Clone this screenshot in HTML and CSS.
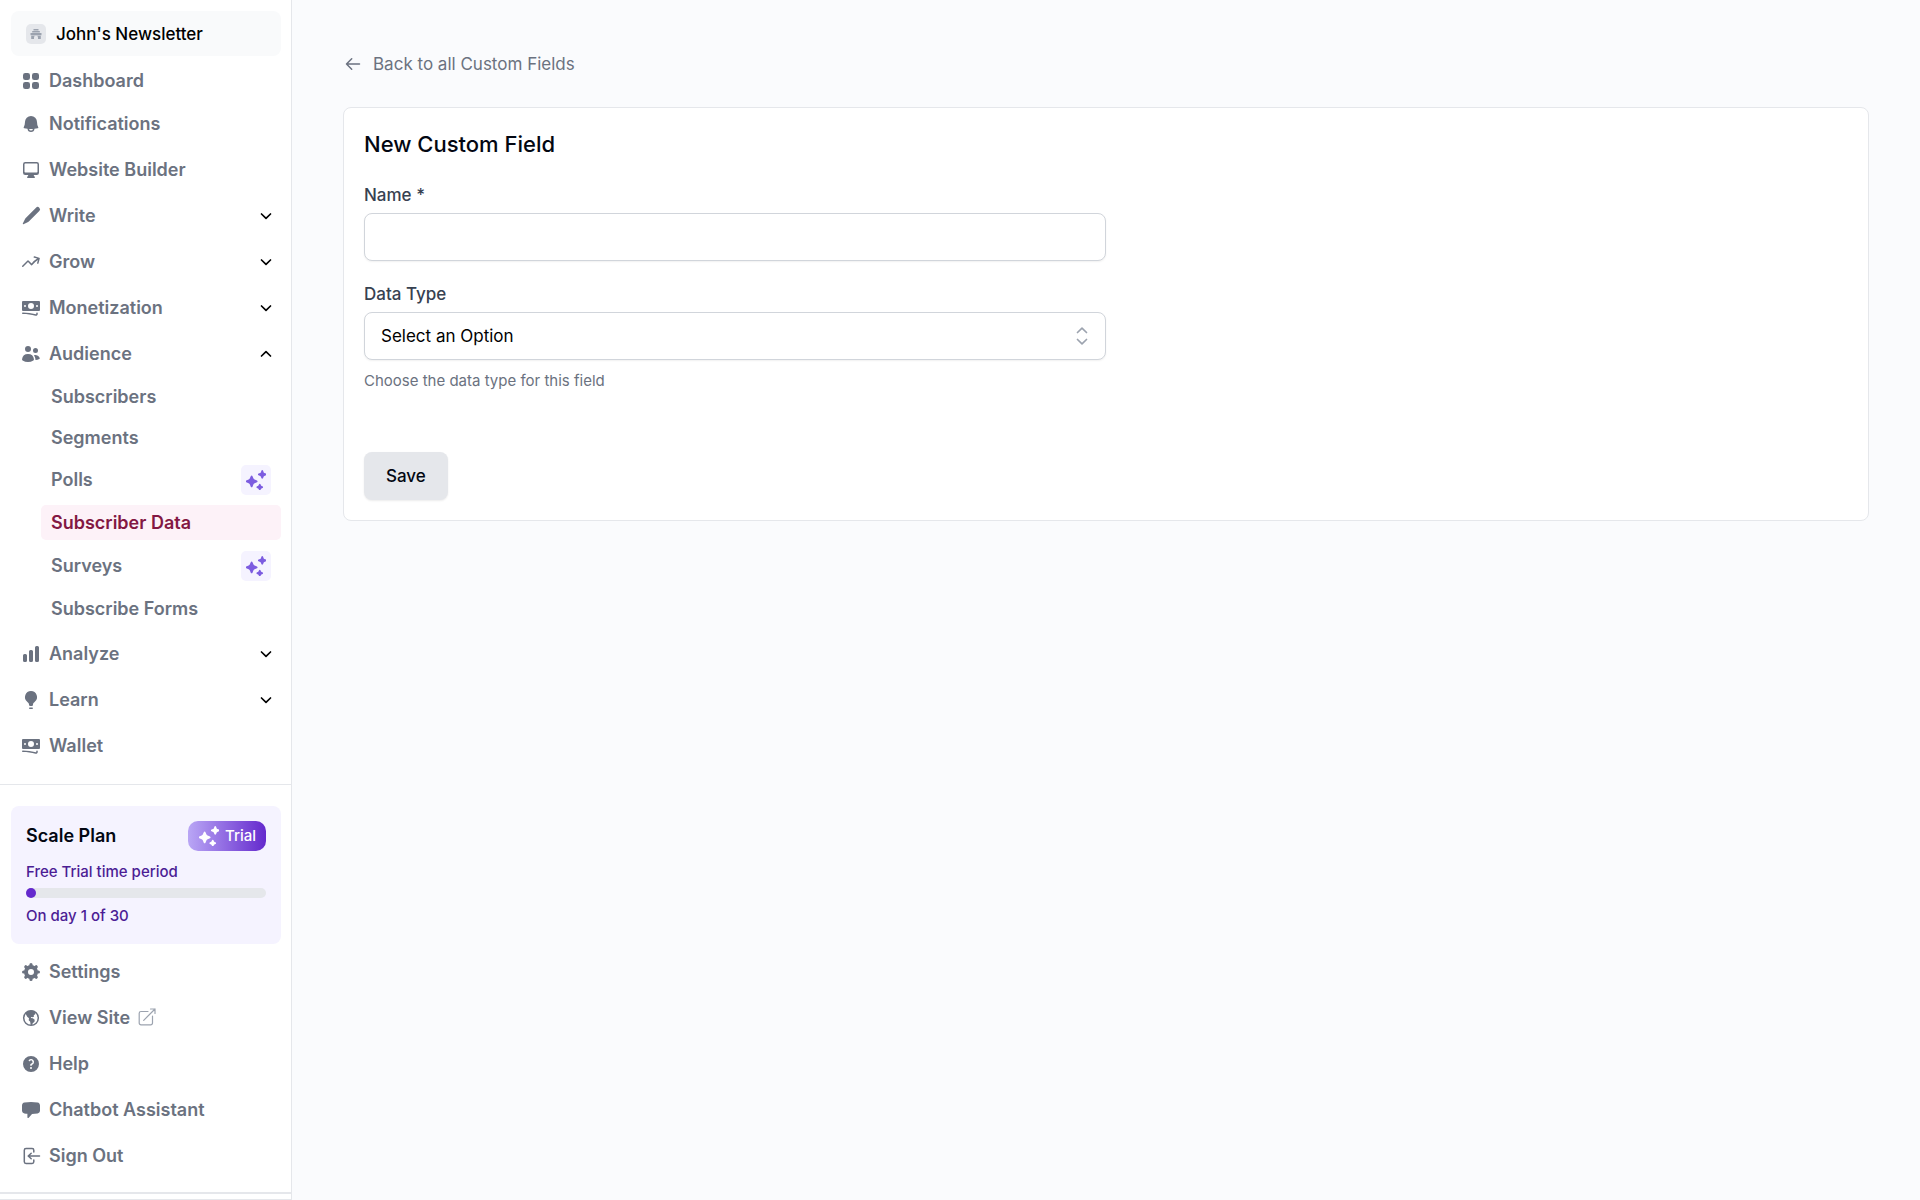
FILE: index.html
```html
<!DOCTYPE html>
<html lang="en">
<head>
<meta charset="utf-8">
<meta name="viewport" content="width=device-width, initial-scale=1">
<title>New Custom Field</title>
<link rel="stylesheet" href="styles.css">
</head>
<body>
<svg class="sprite" aria-hidden="true">
  <symbol id="i-chevron" viewBox="0 0 12 12"><path d="M1.500 4 6 8.300 10.500 4" fill="none" stroke="currentColor" stroke-width="1.700" stroke-linecap="round" stroke-linejoin="round"/></symbol>
  <symbol id="i-sparkles" viewBox="2 1 16 16"><path d="M6.500 5.300c.3 0 .5.200.6.400l.8 1.900c.2.500.5.800 1 1l1.900.8c.6.300.6 1.100 0 1.400l-1.900.8c-.5.200-.8.500-1 1l-.8 1.900c-.3.500-1 .5-1.200 0l-.8-1.900c-.2-.5-.5-.8-1-1l-1.900-.8c-.6-.3-.6-1.100 0-1.400l1.900-.8c.5-.2.800-.5 1-1l.8-1.900c.1-.2.300-.4.600-.4ZM15 1c.3 0 .5.200.6.400l.5 1.300c.1.300.3.500.6.600l1.300.5c.6.300.6 1.100 0 1.400l-1.300.5c-.3.100-.5.300-.6.600l-.5 1.300c-.3.500-1 .5-1.200 0l-.5-1.300c-.1-.3-.3-.5-.6-.6L12 5.200c-.6-.3-.6-1.100 0-1.400l1.300-.5c.3-.1.500-.3.600-.6l.5-1.300c.1-.2.300-.4.600-.4ZM13 12c.3 0 .5.200.6.400l.3.800c.1.200.3.400.5.500l.8.300c.6.300.6 1.100 0 1.400l-.8.300c-.2.100-.4.300-.5.500l-.3.800c-.3.500-1 .5-1.200 0l-.3-.8c-.1-.2-.3-.4-.5-.5l-.8-.3c-.6-.3-.6-1.100 0-1.400l.8-.3c.2-.1.400-.3.500-.5l.3-.8c.1-.2.300-.4.600-.4Z" fill="currentColor"/></symbol>
  <symbol id="i-banknotes" viewBox="0 0 20 20"><path fill="currentColor" fill-rule="evenodd" d="M1 4a1 1 0 0 1 1-1h16a1 1 0 0 1 1 1v8a1 1 0 0 1-1 1H2a1 1 0 0 1-1-1V4Zm12 4a3 3 0 1 1-6 0 3 3 0 0 1 6 0ZM4 9a1 1 0 1 0 0-2 1 1 0 0 0 0 2Zm13-1a1 1 0 1 1-2 0 1 1 0 0 1 2 0ZM1.750 14.500a.75.75 0 0 0 0 1.500c4.417 0 8.693.603 12.749 1.730 1.111.309 2.251-.512 2.251-1.696v-.784a.75.75 0 0 0-1.500 0v.784a.272.272 0 0 1-.35.250A49.043 49.043 0 0 0 1.750 14.500Z"/></symbol>
</svg>
<div class="app">
  <aside class="sidebar">
    <div class="top">
      <button class="workspace" type="button">
        <span class="avatar"><svg viewBox="0 0 12 12" width="12" height="12" aria-hidden="true"><path fill="currentColor" fill-rule="evenodd" d="M3.500 1h5v1.400h-5zM2.200 2.900h7.600v1.600H2.200zM.5 5h11v2.200H.5zM1.200 7.700h9.600V11H8V9.600a2 2 0 0 0-4 0V11H1.200z"/></svg></span>
        <span>John's Newsletter</span>
      </button>
      <nav class="nav" aria-label="Main">
        <a class="item short" href="#"><svg class="icon" viewBox="0 0 20 20" aria-hidden="true"><path fill="currentColor" d="M4.250 2A2.250 2.250 0 0 0 2 4.250v2.500A2.250 2.250 0 0 0 4.250 9h2.500A2.250 2.250 0 0 0 9 6.750v-2.500A2.250 2.250 0 0 0 6.750 2h-2.500Zm0 9A2.250 2.250 0 0 0 2 13.250v2.500A2.250 2.250 0 0 0 4.250 18h2.500A2.250 2.250 0 0 0 9 15.750v-2.500A2.250 2.250 0 0 0 6.750 11h-2.500Zm9-9A2.250 2.250 0 0 0 11 4.250v2.500A2.250 2.250 0 0 0 13.250 9h2.500A2.250 2.250 0 0 0 18 6.750v-2.500A2.250 2.250 0 0 0 15.750 2h-2.500Zm0 9A2.250 2.250 0 0 0 11 13.250v2.500A2.250 2.250 0 0 0 13.250 18h2.500A2.250 2.250 0 0 0 18 15.750v-2.500A2.250 2.250 0 0 0 15.750 11h-2.500Z"/></svg>Dashboard</a>
        <a class="item" href="#"><svg class="icon" viewBox="0 0 20 20" aria-hidden="true"><path fill="currentColor" fill-rule="evenodd" d="M10 2a6 6 0 0 0-6 6c0 1.887-.454 3.665-1.257 5.234a.75.75 0 0 0 .515 1.076 32.910 32.910 0 0 0 3.256.508 3.500 3.500 0 0 0 6.972 0 32.903 32.903 0 0 0 3.256-.508.75.75 0 0 0 .515-1.076A11.448 11.448 0 0 1 16 8a6 6 0 0 0-6-6ZM8.050 14.943a33.540 33.540 0 0 0 3.900 0 2 2 0 0 1-3.900 0Z"/></svg>Notifications</a>
        <a class="item" href="#"><svg class="icon" viewBox="0 0 20 20" aria-hidden="true"><path fill="currentColor" fill-rule="evenodd" d="M2 4.250A2.250 2.250 0 0 1 4.250 2h11.500A2.250 2.250 0 0 1 18 4.250v8.500A2.250 2.250 0 0 1 15.750 15h-3.105a3.501 3.501 0 0 0 1.100 1.677A.75.75 0 0 1 13.260 18H6.740a.75.75 0 0 1-.484-1.323A3.501 3.501 0 0 0 7.355 15H4.250A2.250 2.250 0 0 1 2 12.750v-8.500Zm1.500 0a.75.75 0 0 1 .75-.75h11.500a.75.75 0 0 1 .75.750v7.500a.75.75 0 0 1-.75.750H4.250a.75.75 0 0 1-.75-.75v-7.500Z"/></svg>Website Builder</a>
        <button class="item" type="button"><svg class="icon" viewBox="0 0 20 20" aria-hidden="true"><path fill="currentColor" d="M18.300 1.700a2.300 2.300 0 0 0-3.300 0L5 11.700c-.5.500-.9 1.100-1.200 1.700l-2 4.200c-.2.400.2.800.6.600l4.200-2c.6-.3 1.200-.7 1.700-1.200l10-10a2.300 2.300 0 0 0 0-3.300Z"/></svg>Write<svg class="chevron" aria-hidden="true"><use href="#i-chevron"/></svg></button>
        <button class="item" type="button"><svg class="icon" viewBox="0 0 20 20" aria-hidden="true"><path fill="currentColor" fill-rule="evenodd" d="M12.577 4.878a.75.75 0 0 1 .919-.53l4.780 1.281a.75.75 0 0 1 .531.919l-1.281 4.780a.75.75 0 0 1-1.449-.387l.81-3.022a19.407 19.407 0 0 0-5.594 5.203.75.75 0 0 1-1.139.093L7 10.060l-4.720 4.720a.75.75 0 0 1-1.060-1.061l5.250-5.250a.75.75 0 0 1 1.060 0l3.074 3.073a20.923 20.923 0 0 1 5.545-4.931l-3.042-.815a.75.75 0 0 1-.53-.919Z"/></svg>Grow<svg class="chevron" aria-hidden="true"><use href="#i-chevron"/></svg></button>
        <button class="item" type="button"><svg class="icon" aria-hidden="true"><use href="#i-banknotes"/></svg>Monetization<svg class="chevron" aria-hidden="true"><use href="#i-chevron"/></svg></button>
        <button class="item" type="button" aria-expanded="true"><svg class="icon" viewBox="0 0 20 20" aria-hidden="true"><path fill="currentColor" d="M7 8a3 3 0 1 0 0-6 3 3 0 0 0 0 6ZM14.500 9a2.500 2.500 0 1 0 0-5 2.500 2.500 0 0 0 0 5ZM1.615 16.428a1.224 1.224 0 0 1-.569-1.175 6.002 6.002 0 0 1 11.908 0c.058.467-.172.920-.57 1.174A9.953 9.953 0 0 1 7 18a9.953 9.953 0 0 1-5.385-1.572ZM14.500 16h-.106c.07-.297.088-.611.048-.933a7.470 7.470 0 0 0-1.588-3.755 4.502 4.502 0 0 1 5.874 2.636.818.818 0 0 1-.36.980A7.465 7.465 0 0 1 14.500 16Z"/></svg>Audience<svg class="chevron up" aria-hidden="true"><use href="#i-chevron"/></svg></button>
        <div class="subnav">
          <a class="sub short" href="#">Subscribers</a>
          <a class="sub short" href="#">Segments</a>
          <a class="sub" href="#">Polls<span class="premium"><svg width="20" height="20" aria-hidden="true"><use href="#i-sparkles"/></svg></span></a>
          <a class="sub active" href="#" aria-current="page">Subscriber Data</a>
          <a class="sub" href="#">Surveys<span class="premium"><svg width="20" height="20" aria-hidden="true"><use href="#i-sparkles"/></svg></span></a>
          <a class="sub" href="#">Subscribe Forms</a>
        </div>
        <button class="item" type="button"><svg class="icon" viewBox="0 0 20 20" aria-hidden="true"><path fill="currentColor" d="M15.500 2A1.500 1.500 0 0 0 14 3.500v13a1.500 1.500 0 0 0 1.500 1.500h1a1.500 1.500 0 0 0 1.500-1.500v-13A1.500 1.500 0 0 0 16.500 2h-1ZM9.500 6A1.500 1.500 0 0 0 8 7.500v9A1.500 1.500 0 0 0 9.500 18h1a1.500 1.500 0 0 0 1.500-1.500v-9A1.500 1.500 0 0 0 10.500 6h-1ZM3.500 10A1.500 1.500 0 0 0 2 11.500v5A1.500 1.500 0 0 0 3.500 18h1A1.500 1.500 0 0 0 6 16.500v-5A1.500 1.500 0 0 0 4.500 10h-1Z"/></svg>Analyze<svg class="chevron" aria-hidden="true"><use href="#i-chevron"/></svg></button>
        <button class="item" type="button"><svg class="icon" viewBox="0 0 20 20" aria-hidden="true"><path fill="currentColor" d="M10 1a6 6 0 0 0-3.815 10.631C7.237 12.500 8 13.443 8 14.456v.644a.75.75 0 0 0 .572.729 6.016 6.016 0 0 0 2.856 0A.75.75 0 0 0 12 15.100v-.644c0-1.013.762-1.957 1.815-2.825A6 6 0 0 0 10 1ZM8.863 17.414a.75.75 0 0 0-.226 1.483 9.066 9.066 0 0 0 2.726 0 .75.75 0 0 0-.226-1.483 7.553 7.553 0 0 1-2.274 0Z"/></svg>Learn<svg class="chevron" aria-hidden="true"><use href="#i-chevron"/></svg></button>
        <a class="item" href="#"><svg class="icon" aria-hidden="true"><use href="#i-banknotes"/></svg>Wallet</a>
      </nav>
    </div>
    <div class="bottom">
      <section class="plan">
        <div class="plan-head">
          <h2>Scale Plan</h2>
          <span class="trial"><svg width="20" height="20" aria-hidden="true"><use href="#i-sparkles"/></svg>Trial</span>
        </div>
        <p>Free Trial time period</p>
        <div class="track" role="progressbar" aria-label="Free Trial time period" aria-valuemin="0" aria-valuemax="30" aria-valuenow="1"><div class="fill" style="width:4%"></div></div>
        <p>On day 1 of 30</p>
      </section>
      <nav class="nav" aria-label="Account">
        <a class="item" href="#"><svg class="icon" viewBox="0 0 20 20" aria-hidden="true"><g fill="none" stroke="currentColor"><circle cx="10" cy="10" r="5" stroke-width="4"/><path stroke-width="3.200" stroke-linecap="round" d="M10 2.600v1.800M10 17.400v-1.800M2.600 10h1.800M17.400 10h-1.800M4.800 4.800l1.200 1.200M15.200 15.200l-1.200-1.200M15.200 4.800l-1.200 1.200M4.800 15.200l1.200-1.200"/></g></svg>Settings</a>
        <a class="item" href="#"><svg class="icon" viewBox="0 0 20 20" aria-hidden="true"><circle cx="10" cy="10" r="7.300" fill="none" stroke="currentColor" stroke-width="1.500"/><path fill="currentColor" d="M5 4.500 7.500 3l4-.5 3.200 1.700-.5 2.100-1.500.9.400 1.200-1.500.8-1.400-.3-.4 1.200 2 .2 1.900 1.500-.2 2-1.800 1.400-.7 2-1.400-.4-.4-3-1.500-1.600.3-2-1.800-1.400L5 6.500Z"/></svg>View Site<svg class="external" viewBox="0 0 20 20" aria-hidden="true"><path fill="none" stroke="currentColor" stroke-width="1.200" stroke-linecap="round" stroke-linejoin="round" d="M10 3.500H3A1.800 1.800 0 0 0 1.200 5.300V15A1.800 1.800 0 0 0 3 16.800h9.700a1.800 1.800 0 0 0 1.800-1.800V8M5.700 12.300 17 1m-4.500 0H17v4.500"/></svg></a>
        <a class="item" href="#"><svg class="icon" viewBox="0 0 20 20" aria-hidden="true"><path fill="currentColor" fill-rule="evenodd" d="M18 10a8 8 0 1 1-16 0 8 8 0 0 1 16 0ZM8.940 6.940a.75.75 0 1 1-1.061-1.061 3 3 0 1 1 2.871 5.026v.345a.75.75 0 0 1-1.500 0v-.5c0-.72.570-1.172 1.081-1.287A1.500 1.500 0 1 0 8.940 6.940ZM10 15a1 1 0 1 0 0-2 1 1 0 0 0 0 2Z"/></svg>Help</a>
        <a class="item" href="#"><svg class="icon" viewBox="0 0 20 20" aria-hidden="true"><path fill="currentColor" d="M3.430 2.524A41.290 41.290 0 0 1 10 2c2.236 0 4.430.180 6.570.524 1.437.231 2.430 1.490 2.430 2.902v5.148c0 1.413-.993 2.670-2.430 2.902a41.102 41.102 0 0 1-5.550.496l-3.290 3.809A.75.75 0 0 1 6.400 17.250v-3.460a41.500 41.500 0 0 1-2.970-.314C1.993 13.245 1 11.986 1 10.574V5.426c0-1.413.993-2.670 2.430-2.902Z"/></svg>Chatbot Assistant</a>
        <a class="item" href="#"><svg class="icon" viewBox="0 0 20 20" aria-hidden="true"><path fill="none" stroke="currentColor" stroke-width="1.500" stroke-linecap="round" stroke-linejoin="round" d="M12.800 6V4.200A1.700 1.700 0 0 0 11.100 2.500H5A1.700 1.700 0 0 0 3.300 4.200v11.600A1.700 1.700 0 0 0 5 17.500h6.100a1.700 1.700 0 0 0 1.700-1.700V14M18.500 10H7.500m2.700-2.800L7.200 10l3 2.800"/></svg>Sign Out</a>
      </nav>
    </div>
    <div class="foot"></div>
  </aside>
  <main class="main">
    <a class="back" href="#"><svg viewBox="0 0 20 20" width="20" height="20" aria-hidden="true"><path fill="none" stroke="currentColor" stroke-width="1.500" stroke-linecap="round" stroke-linejoin="round" d="M16.500 10h-13m5.200-5.200L3.500 10l5.200 5.200"/></svg>Back to all Custom Fields</a>
    <form class="card">
      <h1>New Custom Field</h1>
      <div class="field">
        <label for="name">Name *</label>
        <input id="name" type="text">
      </div>
      <div class="field">
        <label for="type">Data Type</label>
        <div class="select">
          <select id="type"><option>Select an Option</option></select>
          <svg viewBox="0 0 24 24" width="24" height="24" aria-hidden="true"><path fill="none" stroke="currentColor" stroke-width="1.700" stroke-linecap="round" stroke-linejoin="round" d="M7.500 8.500 12 4.200l4.500 4.300M7.500 15.500l4.500 4.300 4.500-4.300"/></svg>
        </div>
        <p class="hint">Choose the data type for this field</p>
      </div>
      <button class="save" type="submit">Save</button>
    </form>
  </main>
</div>
</body>
</html>
```
FILE: styles.css
```css
* { box-sizing: border-box; }

body {
  margin: 0;
  background: #fafbfd;
  color: #030712;
  font: 17px/24px Inter, "Liberation Sans", sans-serif;
}

h1, h2, p { margin: 0; }
a { color: inherit; text-decoration: none; }
button, input, select { font: inherit; color: inherit; }
button { border: 0; cursor: pointer; }
svg { flex: none; }
.sprite { display: none; }

.app { display: flex; min-height: 100vh; }

/* Sidebar */
.sidebar {
  display: flex;
  flex-direction: column;
  flex: none;
  width: 292px;
  background: #fff;
  border-right: 1px solid #e5e7eb;
}

.top { padding: 11px 10px 20px 11px; }

.workspace {
  display: flex;
  align-items: center;
  gap: 10px;
  width: 100%;
  height: 45px;
  margin-bottom: 10px;
  padding: 0 15px;
  border-radius: 8px;
  background: #f9fafb;
  color: #000;
  font-size: 17px;
  font-weight: 500;
}

.avatar {
  display: grid;
  place-items: center;
  width: 20px;
  height: 20px;
  border-radius: 5px;
  background: #e5e7eb;
  color: #9ca3af;
}

.nav { display: flex; flex-direction: column; gap: 10px; }

.item {
  display: flex;
  align-items: center;
  gap: 8px;
  height: 36px;
  padding: 0 9px 0 10px;
  background: none;
  color: #6b7280;
  font-size: 18px;
  font-weight: 600;
}
.item.short { height: 30px; }

.icon { width: 20px; height: 20px; }
.chevron { width: 12px; height: 12px; margin-left: auto; color: #000; }
.chevron.up { transform: rotate(180deg); }
.external { width: 20px; height: 20px; color: #9ca3af; }

.subnav { display: flex; flex-direction: column; gap: 8px; margin: -2px 0 0 30px; }

.sub {
  display: flex;
  align-items: center;
  justify-content: space-between;
  height: 35px;
  padding: 0 10px;
  border-radius: 5px;
  color: #6b7280;
  font-size: 18px;
  font-weight: 600;
}
.sub.short { height: 33px; }
.sub.active { background: #fdf2f8; color: #831843; }

.premium {
  display: grid;
  place-items: center;
  width: 30px;
  height: 30px;
  border-radius: 5px;
  background: #f5f3ff;
  color: #7c5ce0;
}

.bottom {
  padding: 21px 10px 18px 11px;
  border-top: 1px solid #e5e7eb;
}

.plan {
  margin-bottom: 10px;
  padding: 15px 15px 16px;
  border-radius: 8px;
  background: #f5f3ff;
  color: #4c1d95;
  font-size: 15px;
  font-weight: 500;
}

.plan-head {
  display: flex;
  align-items: center;
  justify-content: space-between;
  margin-bottom: 9px;
}
.plan-head h2 { color: #030712; font-size: 18px; font-weight: 600; }

.trial {
  display: flex;
  align-items: center;
  gap: 6px;
  height: 30px;
  padding: 0 10px 0 11px;
  border-radius: 10px;
  background: linear-gradient(90deg, #b9a6f5, #6429cd);
  color: #fff;
}

.track { height: 10px; margin: 4px 0 6px; border-radius: 5px; background: #e5e7eb; }
.fill { height: 10px; border-radius: 5px; background: #6429cd; }

.foot { height: 8px; border-top: 2px solid #e5e7eb; border-bottom: 1px solid #e5e7eb; }

/* Main */
.main { flex: 1; min-width: 0; padding: 52px 51px; }

.back {
  display: inline-flex;
  align-items: center;
  gap: 10px;
  margin-bottom: 31px;
  color: #6b7280;
}

.card {
  padding: 22px 20px 20px;
  border: 1px solid #e5e7eb;
  border-radius: 8px;
  background: #fff;
}

h1 { margin-bottom: 25px; font-size: 22px; line-height: 28px; font-weight: 500; }

.field { width: 50%; margin-bottom: 21px; }

.field label {
  display: block;
  margin-bottom: 6px;
  color: #374151;
  font-weight: 500;
}

.field input, .field select {
  display: block;
  width: 100%;
  height: 48px;
  padding: 0 16px;
  border: 1px solid #d1d5db;
  border-radius: 8px;
  background: #fff;
  color: #000;
  box-shadow: 0 1px 2px rgb(0 0 0 / 6%);
  appearance: none;
}

.select { position: relative; }
.select svg { position: absolute; top: 12px; right: 12px; color: #9ca3af; pointer-events: none; }

.hint { margin-top: 9px; color: #6b7280; font-size: 15px; }

.save {
  height: 48px;
  margin-top: 38px;
  padding: 0 22px;
  border-radius: 8px;
  background: #e5e7eb;
  font-weight: 500;
  box-shadow: 0 1px 2px rgb(0 0 0 / 8%);
}
```
